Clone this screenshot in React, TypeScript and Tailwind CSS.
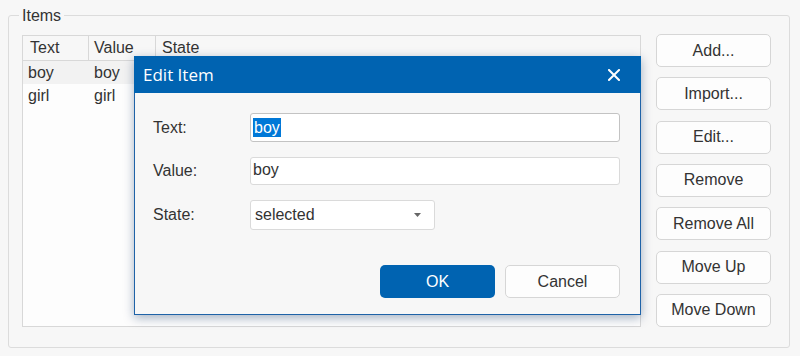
import React from "react";

const btn =
  "h-[33px] w-[115px] rounded-[5px] border border-[#d6d6d6] bg-[#fdfdfd] text-[16px] text-[#333] flex items-center justify-center";

export default function App() {
  const buttons = ["Add...", "Import...", "Edit...", "Remove", "Remove All", "Move Up", "Move Down"];
  return (
    <div
      className="w-[800px] h-[356px] bg-[#f7f7f7] pt-[15px] pl-[8px] relative overflow-hidden"
      style={{ fontFamily: '"Liberation Sans", Arial, sans-serif' }}
    >
      <div className="relative w-[782px] h-[333px] border border-[#dcdcdc] rounded-[3px] pl-[13px] pt-[19px] flex gap-[15px]">
        <div className="absolute left-[10px] top-[-10px] bg-[#f7f7f7] px-[3px] text-[16px] leading-[19px] text-[#333]">
          Items
        </div>
        {/* table */}
        <div className="w-[619px] h-[292px] border border-[#d8d8d8] bg-[#fdfdfd] flex flex-col text-[16px] text-[#333]">
          <div className="flex h-[25px] border-b border-[#d8d8d8] bg-[#f7f7f7] items-center">
            <div className="w-[66px] h-full border-r border-[#d8d8d8] pl-[7px] flex items-center">Text</div>
            <div className="w-[67px] h-full border-r border-[#d8d8d8] pl-[5px] flex items-center">Value</div>
            <div className="flex-1 h-full pl-[6px] flex items-center">State</div>
          </div>
          <div className="flex h-[23px] items-center bg-[#f2f2f2]">
            <div className="w-[66px] pl-[5px]">boy</div>
            <div className="w-[67px] pl-[5px]">boy</div>
            <div className="flex-1 pl-[6px]"></div>
          </div>
          <div className="flex h-[23px] items-center">
            <div className="w-[66px] pl-[5px]">girl</div>
            <div className="w-[67px] pl-[5px]">girl</div>
            <div className="flex-1 pl-[6px]"></div>
          </div>
        </div>
        {/* buttons */}
        <div className="h-[293px] -mt-[1px] flex flex-col justify-between">
          {buttons.map((b) => (
            <div key={b} className={btn}>
              {b}
            </div>
          ))}
        </div>
      </div>

      {/* dialog */}
      <div className="absolute left-[134px] top-[56px] w-[507px] h-[259px] bg-[#f7f7f7] border border-[#1f63a8] shadow-[0_3px_10px_rgba(0,40,90,0.35)] flex flex-col">
        <div className="h-[37px] -mx-px -mt-px bg-[#0063b1] flex items-center justify-between pl-[9px] pr-[21px]">
          <span
            className="text-white text-[17px]"
            style={{ fontFamily: '"Open Sans", "Noto Sans", sans-serif' }}
          >
            Edit Item
          </span>
          <svg width="12" height="12" viewBox="0 0 12 12">
            <path d="M1 1L11 11M11 1L1 11" stroke="white" strokeWidth="2" strokeLinecap="square" />
          </svg>
        </div>
        <div className="flex-1 pl-[18px] pr-[20px] pt-[20px] text-[16px] text-[#333]">
          <div className="flex items-center h-[29px]">
            <div className="w-[97px]">Text:</div>
            <div className="w-[370px] h-[29px] border border-[#c3c3c3] rounded-[3px] bg-white flex items-center pl-[2px]">
              <span className="bg-[#0078d7] text-white leading-[19px] px-[1px]">boy</span>
            </div>
          </div>
          <div className="flex items-center h-[28px] mt-[15px]">
            <div className="w-[97px]">Value:</div>
            <div className="w-[370px] h-[28px] border border-[#dadada] rounded-[3px] bg-white flex items-center pl-[2px] pb-[2px]">
              boy
            </div>
          </div>
          <div className="flex items-center h-[30px] mt-[15px]">
            <div className="w-[97px]">State:</div>
            <div className="w-[185px] h-[30px] border border-[#dadada] rounded-[3px] bg-white flex items-center justify-between pl-[4px] pr-[13px]">
              <span>selected</span>
              <svg width="7" height="4" viewBox="0 0 7 4">
                <path d="M0 0H7L3.5 4Z" fill="#666" />
              </svg>
            </div>
          </div>
          <div className="flex justify-end gap-[10px] mt-[35px]">
            <div className="h-[33px] w-[115px] rounded-[5px] bg-[#0063b1] text-white flex items-center justify-center">
              OK
            </div>
            <div className="h-[33px] w-[115px] rounded-[5px] border border-[#d6d6d6] bg-[#fdfdfd] flex items-center justify-center">
              Cancel
            </div>
          </div>
        </div>
      </div>
    </div>
  );
}
